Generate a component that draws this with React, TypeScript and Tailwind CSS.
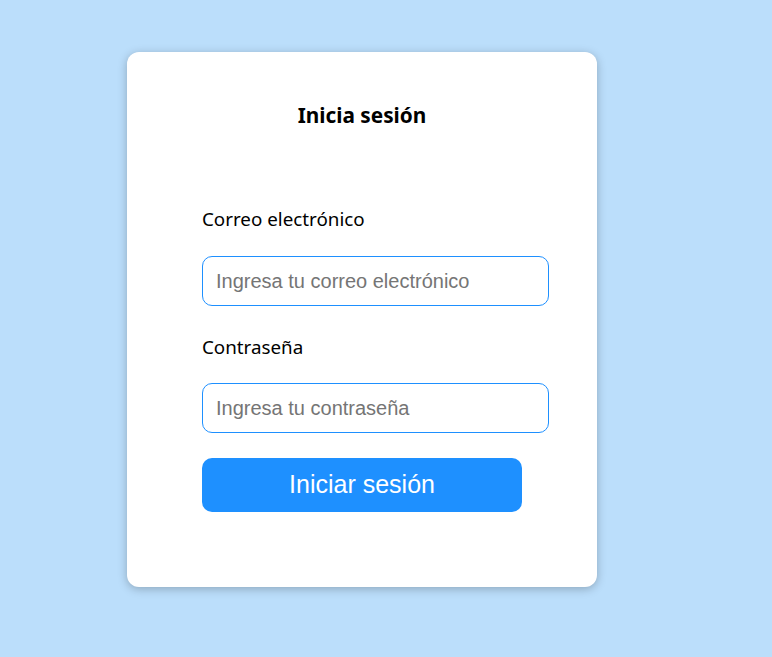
import React from "react";

export default function App() {
  return (
    <div className="min-h-[657px] w-full bg-[#bbdefb] pt-[52px] pl-[127px]">
      <div className="w-[470px] h-[535px] bg-white rounded-[12px] shadow-[0_2px_10px_rgba(0,0,0,0.25)] flex flex-col px-[75px]">
        <h1 className="mt-[49px] h-[28px] leading-[28px] text-center text-[20.8px] font-bold text-black font-['Noto_Sans',sans-serif]">
          Inicia sesión
        </h1>
        <label className="mt-[77px] h-[26px] leading-[26px] text-[18.8px] text-black font-['Noto_Sans',sans-serif]">
          Correo electrónico
        </label>
        <input
          type="email"
          placeholder="Ingresa tu correo electrónico"
          className="mt-[24px] w-[347px] h-[50px] shrink-0 border border-[#1e90ff] rounded-[10px] px-[13px] text-[20px] font-['Liberation_Sans',Arial,sans-serif] placeholder:text-[#757575] outline-none"
        />
        <label className="mt-[28px] h-[26px] leading-[26px] text-[18.8px] text-black font-['Noto_Sans',sans-serif]">
          Contraseña
        </label>
        <input
          type="password"
          placeholder="Ingresa tu contraseña"
          className="mt-[23px] w-[347px] h-[50px] shrink-0 border border-[#1e90ff] rounded-[10px] px-[13px] text-[20px] font-['Liberation_Sans',Arial,sans-serif] placeholder:text-[#757575] outline-none"
        />
        <button className="mt-[25px] w-[320px] h-[54px] shrink-0 bg-[#1e90ff] rounded-[10px] text-white text-[25px] font-['Liberation_Sans',Arial,sans-serif]">
          Iniciar sesión
        </button>
      </div>
    </div>
  );
}
